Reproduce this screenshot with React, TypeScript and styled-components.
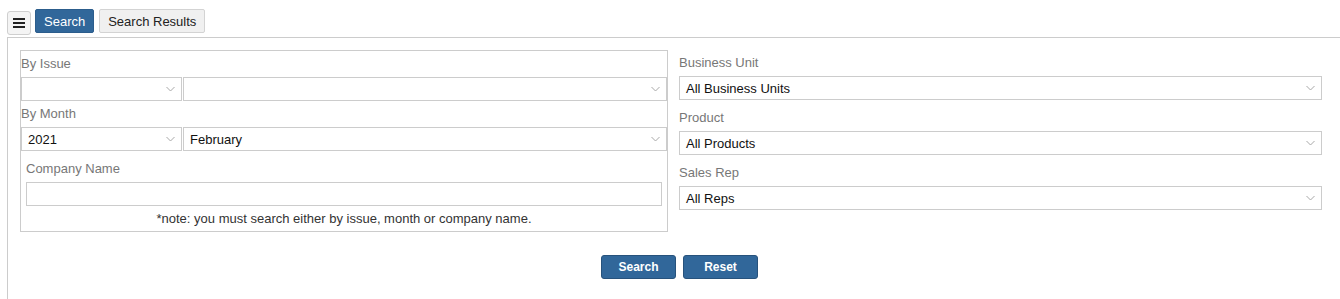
import React, { FC } from 'react'
import styled, { createGlobalStyle } from 'styled-components'

const GlobalStyle = createGlobalStyle`
    body {
        margin: 0;
        background: #ffffff;
        font-family: 'Liberation Sans', Arial, sans-serif;
        color: #222;
    }
`

const App: FC = () => {
    return (
        <>
            <GlobalStyle />
            <TopBar>
                <MenuButton aria-label='menu'>
                    <svg width='14' height='12' viewBox='0 0 14 12'>
                        <rect x='1' y='1' width='12' height='2' fill='#222' />
                        <rect x='1' y='5' width='12' height='2' fill='#222' />
                        <rect x='1' y='9' width='12' height='2' fill='#222' />
                    </svg>
                </MenuButton>
                <Tab active>Search</Tab>
                <Tab>Search Results</Tab>
            </TopBar>
            <Panel>
                <FormGrid>
                    <IssueBox>
                        <BoxLabel>By Issue</BoxLabel>
                        <SelectRow>
                            <Dropdown value='' />
                            <Dropdown value='' />
                        </SelectRow>
                        <BoxLabel>By Month</BoxLabel>
                        <SelectRow>
                            <Dropdown value='2021' />
                            <Dropdown value='February' />
                        </SelectRow>
                        <CompanyBlock>
                            <FieldLabel>Company Name</FieldLabel>
                            <TextInput />
                        </CompanyBlock>
                        <Note>*note: you must search either by issue, month or company name.</Note>
                    </IssueBox>
                    <RightColumn>
                        <FieldLabel>Business Unit</FieldLabel>
                        <Dropdown value='All Business Units' />
                        <FieldLabel spaced>Product</FieldLabel>
                        <Dropdown value='All Products' />
                        <FieldLabel spaced>Sales Rep</FieldLabel>
                        <Dropdown value='All Reps' />
                    </RightColumn>
                </FormGrid>
                <ButtonRow>
                    <ActionButton>Search</ActionButton>
                    <ActionButton>Reset</ActionButton>
                </ButtonRow>
            </Panel>
        </>
    )
}

const Dropdown: FC<{ value: string }> = ({ value }) => {
    return (
        <SelectBox>
            <SelectText>{value}</SelectText>
            <svg width='9' height='6' viewBox='0 0 9 6'>
                <path d='M0.5 1 L4.5 5 L8.5 1' stroke='#a8a8a8' strokeWidth='1' fill='none' />
            </svg>
        </SelectBox>
    )
}

const TopBar = styled.div`
    display: flex;
    align-items: flex-start;
    gap: 4px;
    padding: 9px 0 0 7px;
    height: 28px;
    box-sizing: border-box;
`

const MenuButton = styled.button`
    margin-top: 2px;
    width: 24px;
    height: 24px;
    padding: 0;
    display: flex;
    align-items: center;
    justify-content: center;
    background: #f4f4f4;
    border: 1px solid #cfcfcf;
    border-radius: 3px;
`

const Tab = styled.button<{ active?: boolean }>`
    height: 24px;
    padding: 0 8px;
    font-family: 'Liberation Sans', Arial, sans-serif;
    font-size: 13px;
    border-radius: 2px;
    color: ${props => (props.active ? '#ffffff' : '#222222')};
    background: ${props => (props.active ? '#31679a' : '#f0f0f0')};
    border: 1px solid ${props => (props.active ? '#2c5d8c' : '#d3d3d3')};
    margin-left: ${props => (props.active ? '0' : '1px')};
`

const Panel = styled.div`
    margin: 9px 0 0 7px;
    border-top: 1px solid #cccccc;
    border-left: 1px solid #cccccc;
    padding: 12px 18px 20px 12px;
`

const FormGrid = styled.div`
    display: grid;
    grid-template-columns: 648px 1fr;
    gap: 11px;
    align-items: start;
`

const IssueBox = styled.div`
    border: 1px solid #cccccc;
    display: flex;
    flex-direction: column;
`

const BoxLabel = styled.div`
    height: 26px;
    line-height: 26px;
    font-size: 13px;
    color: #777777;
`

const SelectRow = styled.div`
    display: grid;
    grid-template-columns: 161px 1fr;
    gap: 1px;
`

const SelectBox = styled.div`
    height: 24px;
    box-sizing: border-box;
    border: 1px solid #cccccc;
    background: #ffffff;
    display: flex;
    align-items: center;
    justify-content: space-between;
    padding: 0 6px 0 6px;
`

const SelectText = styled.span`
    font-size: 13px;
    color: #111111;
`

const CompanyBlock = styled.div`
    padding: 5px 5px 0 5px;
    display: flex;
    flex-direction: column;
`

const FieldLabel = styled.div<{ spaced?: boolean }>`
    height: 26px;
    line-height: 26px;
    font-size: 13px;
    color: #777777;
    margin-top: ${props => (props.spaced ? '5px' : '0')};
`

const TextInput = styled.div`
    height: 24px;
    box-sizing: border-box;
    border: 1px solid #cccccc;
`

const Note = styled.div`
    height: 25px;
    line-height: 26px;
    text-align: center;
    font-size: 13px;
    color: #333333;
`

const RightColumn = styled.div`
    display: flex;
    flex-direction: column;
`

const ButtonRow = styled.div`
    display: flex;
    justify-content: center;
    gap: 7px;
    padding: 23px 0 0 17px;
`

const ActionButton = styled.button`
    width: 75px;
    height: 24px;
    padding: 0;
    font-family: 'Liberation Sans', Arial, sans-serif;
    font-size: 12px;
    font-weight: bold;
    color: #ffffff;
    background: #31679a;
    border: 1px solid #27527c;
    border-radius: 3px;
`

export default App
